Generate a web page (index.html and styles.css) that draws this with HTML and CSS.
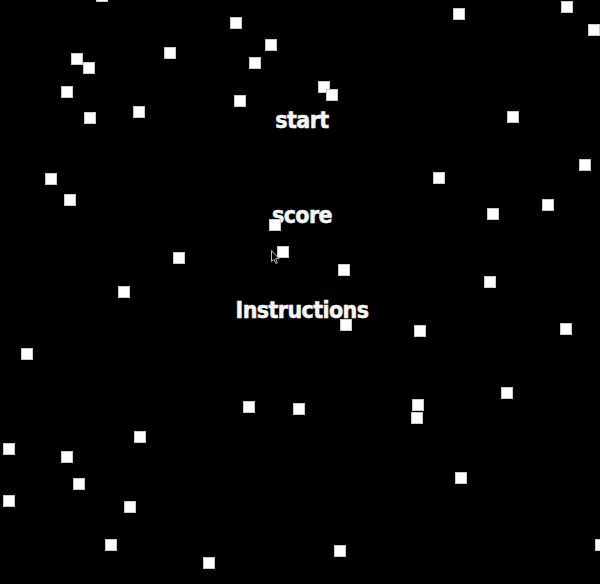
FILE: index.html
```html
<!DOCTYPE html>
<html>
<head>
<meta charset="utf-8">
<link rel="stylesheet" href="styles.css">
</head>
<body>
<div class="screen">
  <nav class="menu">
    <div class="item">start</div>
    <div class="item">score</div>
    <div class="item">Instructions</div>
  </nav>
  <div class="stars">
    <i class="star" style="left:96px;top:-10px"></i>
    <i class="star" style="left:230px;top:17px"></i>
    <i class="star" style="left:265px;top:39px"></i>
    <i class="star" style="left:249px;top:57px"></i>
    <i class="star" style="left:164px;top:47px"></i>
    <i class="star" style="left:71px;top:53px"></i>
    <i class="star" style="left:83px;top:62px"></i>
    <i class="star" style="left:61px;top:86px"></i>
    <i class="star" style="left:84px;top:112px"></i>
    <i class="star" style="left:133px;top:106px"></i>
    <i class="star" style="left:234px;top:95px"></i>
    <i class="star" style="left:45px;top:173px"></i>
    <i class="star" style="left:64px;top:194px"></i>
    <i class="star" style="left:318px;top:81px"></i>
    <i class="star" style="left:326px;top:89px"></i>
    <i class="star" style="left:453px;top:8px"></i>
    <i class="star" style="left:561px;top:1px"></i>
    <i class="star" style="left:588px;top:24px"></i>
    <i class="star" style="left:507px;top:111px"></i>
    <i class="star" style="left:579px;top:159px"></i>
    <i class="star" style="left:433px;top:172px"></i>
    <i class="star" style="left:542px;top:199px"></i>
    <i class="star" style="left:487px;top:208px"></i>
    <i class="star" style="left:338px;top:264px"></i>
    <i class="star" style="left:484px;top:276px"></i>
    <i class="star" style="left:340px;top:319px"></i>
    <i class="star" style="left:414px;top:325px"></i>
    <i class="star" style="left:560px;top:323px"></i>
    <i class="star" style="left:501px;top:387px"></i>
    <i class="star" style="left:412px;top:399px"></i>
    <i class="star" style="left:411px;top:412px"></i>
    <i class="star" style="left:293px;top:403px"></i>
    <i class="star" style="left:455px;top:472px"></i>
    <i class="star" style="left:334px;top:545px"></i>
    <i class="star" style="left:595px;top:539px"></i>
    <i class="star" style="left:173px;top:252px"></i>
    <i class="star" style="left:118px;top:286px"></i>
    <i class="star" style="left:21px;top:348px"></i>
    <i class="star" style="left:269px;top:219px"></i>
    <i class="star" style="left:277px;top:246px"></i>
    <i class="star" style="left:243px;top:401px"></i>
    <i class="star" style="left:134px;top:431px"></i>
    <i class="star" style="left:3px;top:443px"></i>
    <i class="star" style="left:61px;top:451px"></i>
    <i class="star" style="left:73px;top:478px"></i>
    <i class="star" style="left:3px;top:495px"></i>
    <i class="star" style="left:124px;top:501px"></i>
    <i class="star" style="left:105px;top:539px"></i>
    <i class="star" style="left:203px;top:557px"></i>
  </div>
  <svg class="cursor" width="10" height="15" viewBox="0 0 10 15">
    <path d="M0.5 0.5 L0.5 11.5 L3 9.2 L4.8 13.5 L6.4 12.8 L4.7 8.7 L8 8.7 Z" fill="#000" stroke="#bbb" stroke-width="1"/>
  </svg>
</div>
</body>
</html>
```
FILE: styles.css
```css
html, body {
  margin: 0;
  padding: 0;
  background: #000;
}

.screen {
  position: relative;
  width: 600px;
  height: 584px;
  background: #000;
  overflow: hidden;
}

.menu {
  display: flex;
  flex-direction: column;
  align-items: center;
  gap: 71px;
  padding-top: 108px;
  padding-left: 4px;
}

.item {
  font-family: "DejaVu Sans Condensed", "DejaVu Sans", sans-serif;
  font-stretch: condensed;
  font-weight: bold;
  font-size: 23px;
  line-height: 24px;
  letter-spacing: -0.6px;
  color: #f6f6f6;
  -webkit-text-stroke: 0.5px #f6f6f6;
}

.stars {
  position: absolute;
  inset: 0;
}

.star {
  position: absolute;
  width: 10px;
  height: 10px;
  background: #fff;
  border: 1px solid #c9c9c9;
}

.cursor {
  position: absolute;
  left: 271px;
  top: 250px;
}
```
